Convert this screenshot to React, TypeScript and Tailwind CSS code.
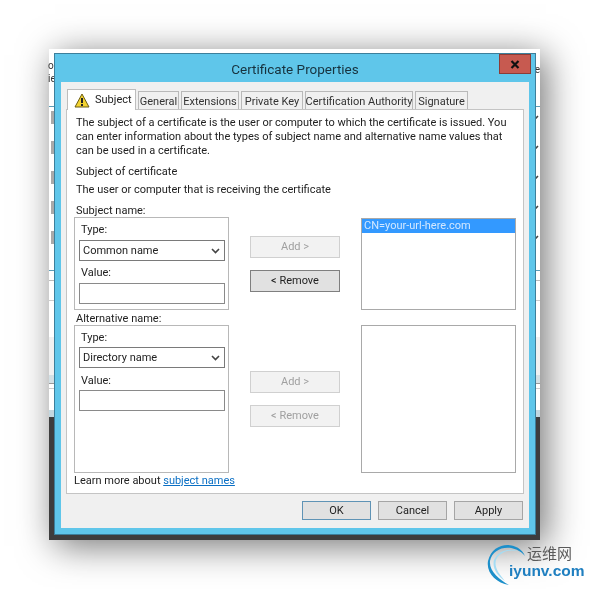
import React from 'react';

const Chevron: React.FC = () => (
  <svg width="9" height="6" viewBox="0 0 9 6" fill="none">
    <path d="M1 1l3.5 3.5L8 1" stroke="#444" strokeWidth="1.6" />
  </svg>
);

const Tab: React.FC<{ width: string; children: React.ReactNode }> = ({ width, children }) => (
  <div className={`${width} h-[18px] pt-px border border-b-0 border-[#b9b9b9] bg-[#f0f0f0] flex items-center justify-center leading-none text-[#333] whitespace-nowrap`}>
    {children}
  </div>
);

const Label: React.FC<{ className?: string; children: React.ReactNode }> = ({ className, children }) => (
  <div className={`h-[14px] leading-[16px] ${className ?? ''}`}>{children}</div>
);

const Select: React.FC<{ value: string; className?: string }> = ({ value, className }) => (
  <div className={`w-[146px] h-[21px] pt-px border border-[#7a7a7a] bg-white flex items-center justify-between pl-[3px] pr-[4px] ${className ?? ''}`}>
    <span>{value}</span>
    <Chevron />
  </div>
);

const Input: React.FC<{ className?: string }> = ({ className }) => (
  <div className={`w-[146px] h-[21px] border border-[#8a8a8a] bg-white ${className ?? ''}`}></div>
);

const SideButton: React.FC<{ enabled?: boolean; className?: string; children: React.ReactNode }> = ({ enabled, className, children }) => (
  <div
    className={`w-[90px] h-[22px] border flex items-center justify-center ${
      enabled ? 'border-[#7f7f7f] bg-[#e1e1e1] text-[#222]' : 'border-[#d0d0d0] bg-[#f2f2f2] text-[#a0a0a0]'
    } ${className ?? ''}`}
  >
    {children}
  </div>
);

const FooterButton: React.FC<{ primary?: boolean; children: React.ReactNode }> = ({ primary, children }) => (
  <div className={`w-[69px] h-[19px] pt-px border bg-[#e1e1e1] flex items-center justify-center ${primary ? 'border-[#5f93b5]' : 'border-[#a5a5a5]'}`}>
    {children}
  </div>
);

// one row of the window behind the dialog: a grey block on the left, a chevron on the right
const BackRow: React.FC = () => (
  <div className="h-[13px] flex items-center justify-between pr-[1px]">
    <div className="ml-[2px] w-[3px] h-[13px] bg-[#a9a9a9]"></div>
    <Chevron />
  </div>
);

export default function App() {
  return (
    <div className="relative w-[590px] h-[589px] bg-white overflow-hidden font-['Roboto',sans-serif] text-[11px] text-[#222] blur-[0.3px]">
      {/* window behind the dialog, only its edges show */}
      <div className="absolute left-[49px] top-[49px] w-[491px] h-[491px] bg-white shadow-[6px_6px_34px_rgba(0,0,0,0.55)] flex flex-col">
        <div className="h-[57px] pt-[10px] flex justify-between text-[10px] leading-[13px] text-[#333]">
          <div className="-ml-[1px]">
            <div>o</div>
            <div>ie</div>
          </div>
          <div className="pt-[4px]">e</div>
        </div>
        <div className="h-px bg-[#5c9db8]"></div>
        <div className="mt-[4px] flex flex-col gap-[17px]">
          <BackRow />
          <BackRow />
          <BackRow />
          <BackRow />
          <BackRow />
        </div>
        <div className="mt-[26px] h-px bg-[#5c9db8]"></div>
        <div className="mt-[9px] h-px bg-[#bbb]"></div>
        <div className="mt-[19px] h-px bg-[#ccc]"></div>
        <div className="mt-[36px] h-[38px] bg-[#f1f1f1]"></div>
        <div className="h-[8px] bg-[#d3e0e5]"></div>
        <div className="h-px bg-[#999]"></div>
        <div className="mt-[4px] h-px bg-[#ccc]"></div>
        <div className="mt-[21px] h-[7px] bg-[#c3d7df]"></div>
        <div className="flex-1 bg-[#3d3d3d]"></div>
      </div>

      {/* dialog */}
      <div className="absolute left-[54px] top-[53px] w-[482px] h-[482px] border border-[#3c7f9b] bg-[#5fc6ea] flex flex-col">
        <div className="relative h-[28px] pt-[2px] flex items-center justify-center text-[13.5px] text-[#17323e]">
          Certificate Properties
          <div className="absolute right-[4px] top-0 w-[32px] h-[20px] bg-[#c75a50] border border-[#8d3c36] flex items-center justify-center">
            <svg width="10" height="9" viewBox="0 0 10 9">
              <path d="M1.5 1l7 7M8.5 1l-7 7" stroke="#111" strokeWidth="2.2" />
            </svg>
          </div>
        </div>

        <div className="mx-[6px] h-[446px] bg-[#f0f0f0] pt-[7px]">
          {/* tabs */}
          <div className="flex items-end gap-[2px] pl-[6px] h-[20px]">
            <div className="relative z-10 -mb-px w-[69px] h-[21px] border border-b-0 border-[#bdbdbd] bg-white flex items-center pl-[6px] gap-[5px]">
              <svg width="16" height="15" viewBox="0 0 16 15">
                <path d="M8 1L15 14H1Z" fill="#f3d331" stroke="#6b5d12" strokeWidth="1" strokeLinejoin="round" />
                <path d="M8 5v5" stroke="#222" strokeWidth="2" />
                <path d="M8 11v2" stroke="#222" strokeWidth="2" />
              </svg>
              <span>Subject</span>
            </div>
            <Tab width="w-[41px]">General</Tab>
            <Tab width="w-[58px]">Extensions</Tab>
            <Tab width="w-[62px]">Private Key</Tab>
            <Tab width="w-[108px]">Certification Authority</Tab>
            <Tab width="w-[53px]">Signature</Tab>
          </div>

          {/* tab panel */}
          <div className="ml-[5px] w-[458px] h-[385px] border border-[#c4c4c4] bg-white pl-[7px] pt-[6px]">
            <div className="ml-[2px] w-[440px] leading-[14px]">
              The subject of a certificate is the user or computer to which the certificate is issued. You can enter information about the types of subject name and alternative name values that can be used in a certificate.
            </div>
            <Label className="ml-[2px] mt-[6px]">Subject of certificate</Label>
            <Label className="ml-[2px] mt-[4px]">The user or computer that is receiving the certificate</Label>
            <Label className="ml-[2px] mt-[7px]">Subject name:</Label>

            <div className="flex gap-[21px]">
              <div className="w-[155px]">
                <div className="h-[93px] border border-[#b8b8b8] px-[4px] pt-[4px]">
                  <Label className="ml-[2px]">Type:</Label>
                  <Select value="Common name" className="mt-[4px]" />
                  <Label className="ml-[2px] mt-[4px]">Value:</Label>
                  <Input className="mt-[4px]" />
                </div>
                <Label className="ml-[2px] mt-px">Alternative name:</Label>
                <div className="h-[148px] border border-[#b8b8b8] px-[4px] pt-[4px]">
                  <Label className="ml-[2px]">Type:</Label>
                  <Select value="Directory name" className="mt-[3px]" />
                  <Label className="ml-[2px] mt-[5px]">Value:</Label>
                  <Input className="mt-[3px]" />
                </div>
                <Label className="whitespace-nowrap">
                  Learn more about <span className="text-[#0a6fc4] underline">subject names</span>
                </Label>
              </div>

              <div className="w-[90px]">
                <SideButton className="mt-[19px]">Add &gt;</SideButton>
                <SideButton enabled className="mt-[12px]">&lt; Remove</SideButton>
                <SideButton className="mt-[79px]">Add &gt;</SideButton>
                <SideButton className="mt-[12px]">&lt; Remove</SideButton>
              </div>

              <div className="w-[155px]">
                <div className="mt-px h-[92px] border border-[#a9a9a9]">
                  <div className="h-[14px] leading-[14px] bg-[#3399ff] text-[#d3e8ff] pl-[2px]">CN=your-url-here.com</div>
                </div>
                <div className="mt-[15px] h-[148px] border border-[#a9a9a9]"></div>
              </div>
            </div>
          </div>

          {/* dialog buttons */}
          <div className="flex justify-end gap-[7px] pr-[6px] mt-[7px]">
            <FooterButton primary>OK</FooterButton>
            <FooterButton>Cancel</FooterButton>
            <FooterButton>Apply</FooterButton>
          </div>
        </div>
      </div>

      {/* watermark */}
      <div className="absolute left-[486px] top-[541px] w-[100px] h-[46px]">
        <svg className="absolute left-0 top-0" width="44" height="46" viewBox="0 0 44 46">
          <path d="M39 15C33 0 7 -1 2 20C0 32 10 42 23 44C13 38 3 30 4 20C7 5 28 2 39 15Z" fill="#1c8fca" />
          <path d="M36 12C26 6 13 8 8 19C6 27 11 35 19 40C13 33 8 26 10 19C14 10 26 7 36 12Z" fill="#a5dcf3" />
        </svg>
        <div className="pl-[41px] pt-[3px] text-[15px] leading-[18px] text-[#5a5a5a] font-['Noto_Sans_CJK_SC',sans-serif]">运维网</div>
        <div className="pl-[23px] text-[15.5px] leading-[18px] font-bold text-[#1f7fc0] font-['Liberation_Sans',sans-serif]">iyunv.com</div>
      </div>
    </div>
  );
}
